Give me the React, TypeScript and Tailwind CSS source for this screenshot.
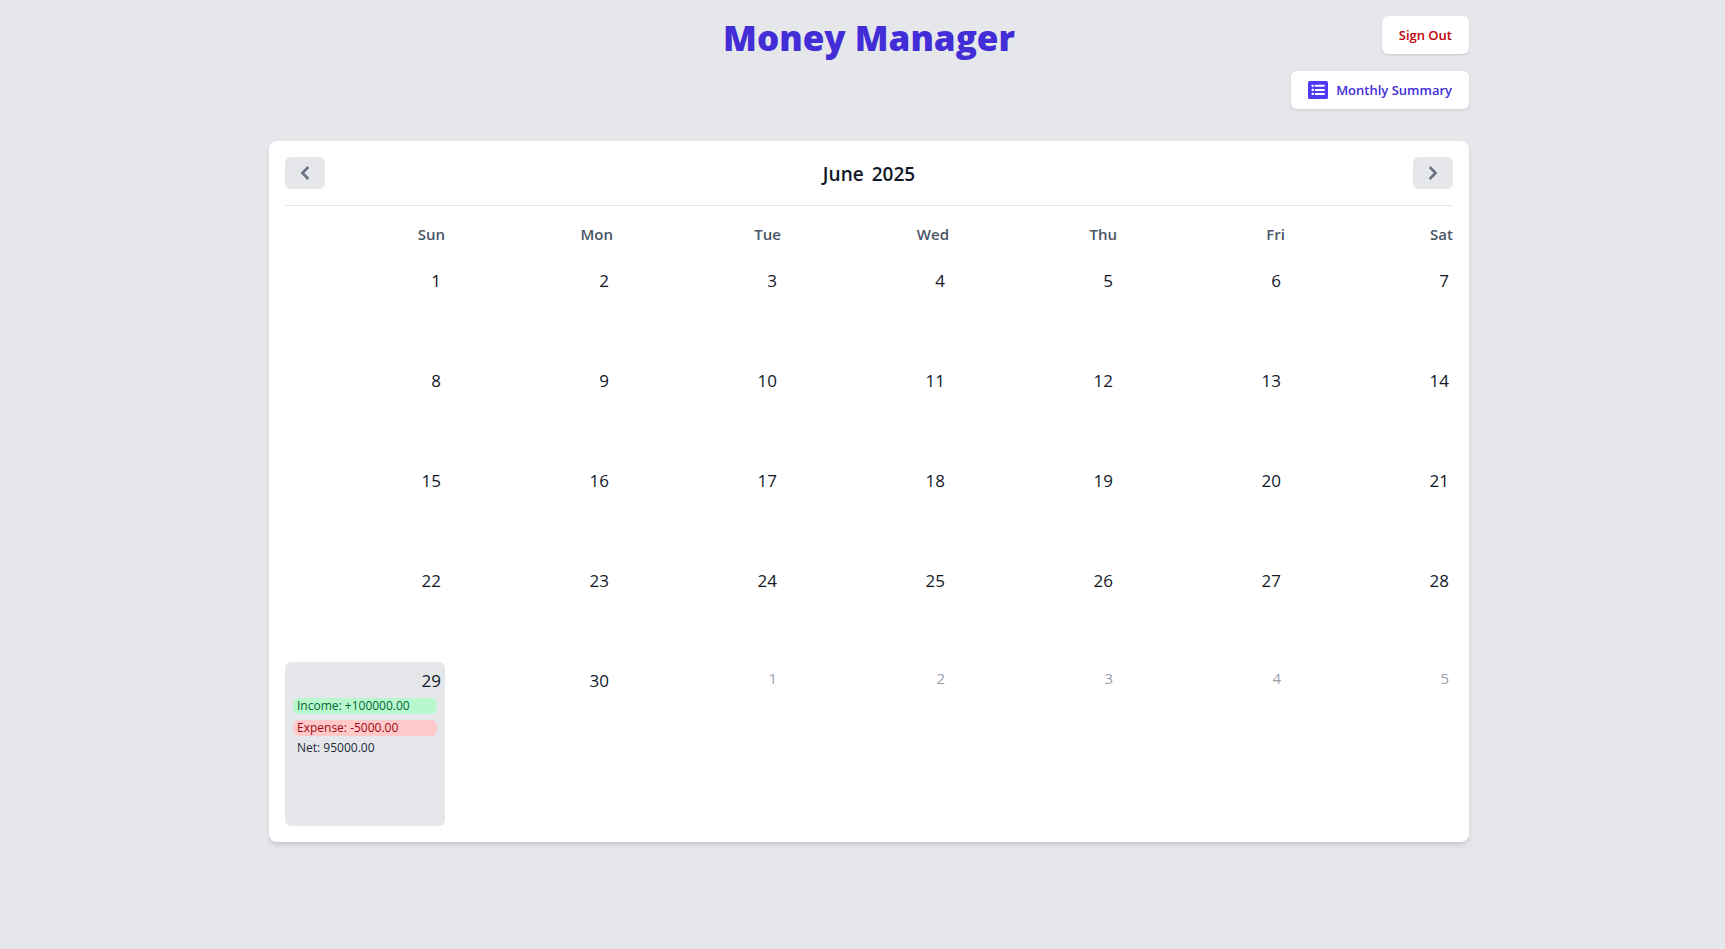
type Entry = { income: string; expense: string; net: string };
type Day = { date: number; outside?: boolean; entry?: Entry };

const weekdays = ["Sun", "Mon", "Tue", "Wed", "Thu", "Fri", "Sat"];

const days: Day[] = [
  ...Array.from({ length: 30 }, (_, i): Day => ({ date: i + 1 })),
  ...Array.from({ length: 5 }, (_, i): Day => ({ date: i + 1, outside: true })),
];
days[28].entry = { income: "+100000.00", expense: "-5000.00", net: "95000.00" };

const weeks = Array.from({ length: 5 }, (_, i) => days.slice(i * 7, i * 7 + 7));

function ListIcon() {
  return (
    <svg viewBox="0 0 20 18" className="h-[18px] w-5" aria-hidden="true">
      <rect width="20" height="18" rx="1.6" fill="#4f39f6" />
      <g fill="#fff">
        <rect x="3.6" y="3.7" width="2.2" height="2.2" rx="0.6" />
        <rect x="3.6" y="7.8" width="2.2" height="2.2" rx="0.6" />
        <rect x="3.6" y="11.8" width="2.2" height="2.2" rx="0.6" />
        <rect x="6.8" y="3.8" width="9.9" height="2" rx="0.5" />
        <rect x="6.8" y="7.9" width="9.9" height="2" rx="0.5" />
        <rect x="6.8" y="11.9" width="9.9" height="2" rx="0.5" />
      </g>
    </svg>
  );
}

function Chevron({ points }: { points: string }) {
  return (
    <svg viewBox="0 0 16 16" className="size-4" fill="none" stroke="currentColor" strokeWidth="2.6" strokeLinejoin="miter" aria-hidden="true">
      <polyline points={points} />
    </svg>
  );
}

function DayCell({ day }: { day: Day }) {
  if (day.outside) {
    return (
      <td className="p-0 pt-1 pr-1 text-right align-top text-[15px] leading-6 text-gray-400">
        {day.date}
      </td>
    );
  }
  return (
    <td className={day.entry ? "rounded-md bg-gray-200 p-0 align-top" : "p-0 align-top"}>
      <button type="button" className="block w-full cursor-pointer pt-1 pr-1 text-right text-[17px] leading-[30px] text-gray-900">
        {day.date}
      </button>
      {day.entry && (
        <div className="mx-2 mt-0.5 text-xs leading-4">
          <p className="rounded-md bg-[#b9f8cf] px-1 text-[#016630]">Income: {day.entry.income}</p>
          <p className="mt-1.5 rounded-md bg-[#ffc9c9] px-1 text-[#9f0712]">Expense: {day.entry.expense}</p>
          <p className="mt-1 px-1 text-gray-800">Net: {day.entry.net}</p>
        </div>
      )}
    </td>
  );
}

export default function App() {
  return (
    <div className="min-h-screen bg-gray-200 pt-4 pl-[13px] font-['Open_Sans','Noto_Sans',sans-serif]">
      <div className="mx-auto max-w-[1200px]">
        <header className="grid grid-cols-[1fr_auto_1fr] items-start">
          <h1 className="col-start-2 text-[35px] leading-[44px] font-extrabold text-[#432dd7]">Money Manager</h1>
          <div className="flex flex-col items-end gap-[17px]">
            <button type="button" className="rounded-md bg-white px-[17px] py-[9px] text-[13px] leading-5 font-semibold text-[#c10007] shadow-sm">
              Sign Out
            </button>
            <button type="button" className="flex items-center gap-2 rounded-md bg-white px-[17px] py-[9px] text-[13px] leading-5 font-semibold text-[#432dd7] shadow-sm">
              <ListIcon />
              Monthly Summary
            </button>
          </div>
        </header>

        <main className="mt-8 rounded-lg bg-white p-4 shadow-md">
          <div className="flex items-center justify-between border-b border-gray-200 pb-4">
            <button type="button" aria-label="Previous month" className="flex h-8 w-10 items-center justify-center rounded-md bg-gray-200 text-gray-500">
              <Chevron points="11.3,2 5.4,8 11.3,14" />
            </button>
            <h2 className="flex gap-2 pt-0.5 text-[19px] leading-[30px] font-semibold text-gray-900">
              <span>June</span>
              <span>2025</span>
            </h2>
            <button type="button" aria-label="Next month" className="flex h-8 w-10 items-center justify-center rounded-md bg-gray-200 text-gray-500">
              <Chevron points="4.7,2 10.6,8 4.7,14" />
            </button>
          </div>

          <table className="-mx-2 mt-2 -mb-2 w-[calc(100%+16px)] table-fixed border-separate border-spacing-2">
            <thead>
              <tr>
                {weekdays.map((name) => (
                  <th key={name} scope="col" className="h-8 p-0 text-right align-top text-[15px] leading-6 font-semibold text-gray-600">
                    {name}
                  </th>
                ))}
              </tr>
            </thead>
            <tbody>
              {weeks.map((week, i) => (
                <tr key={i} className="h-[92px] last:h-[164px]">
                  {week.map((day, j) => (
                    <DayCell key={j} day={day} />
                  ))}
                </tr>
              ))}
            </tbody>
          </table>
        </main>
      </div>
    </div>
  );
}
